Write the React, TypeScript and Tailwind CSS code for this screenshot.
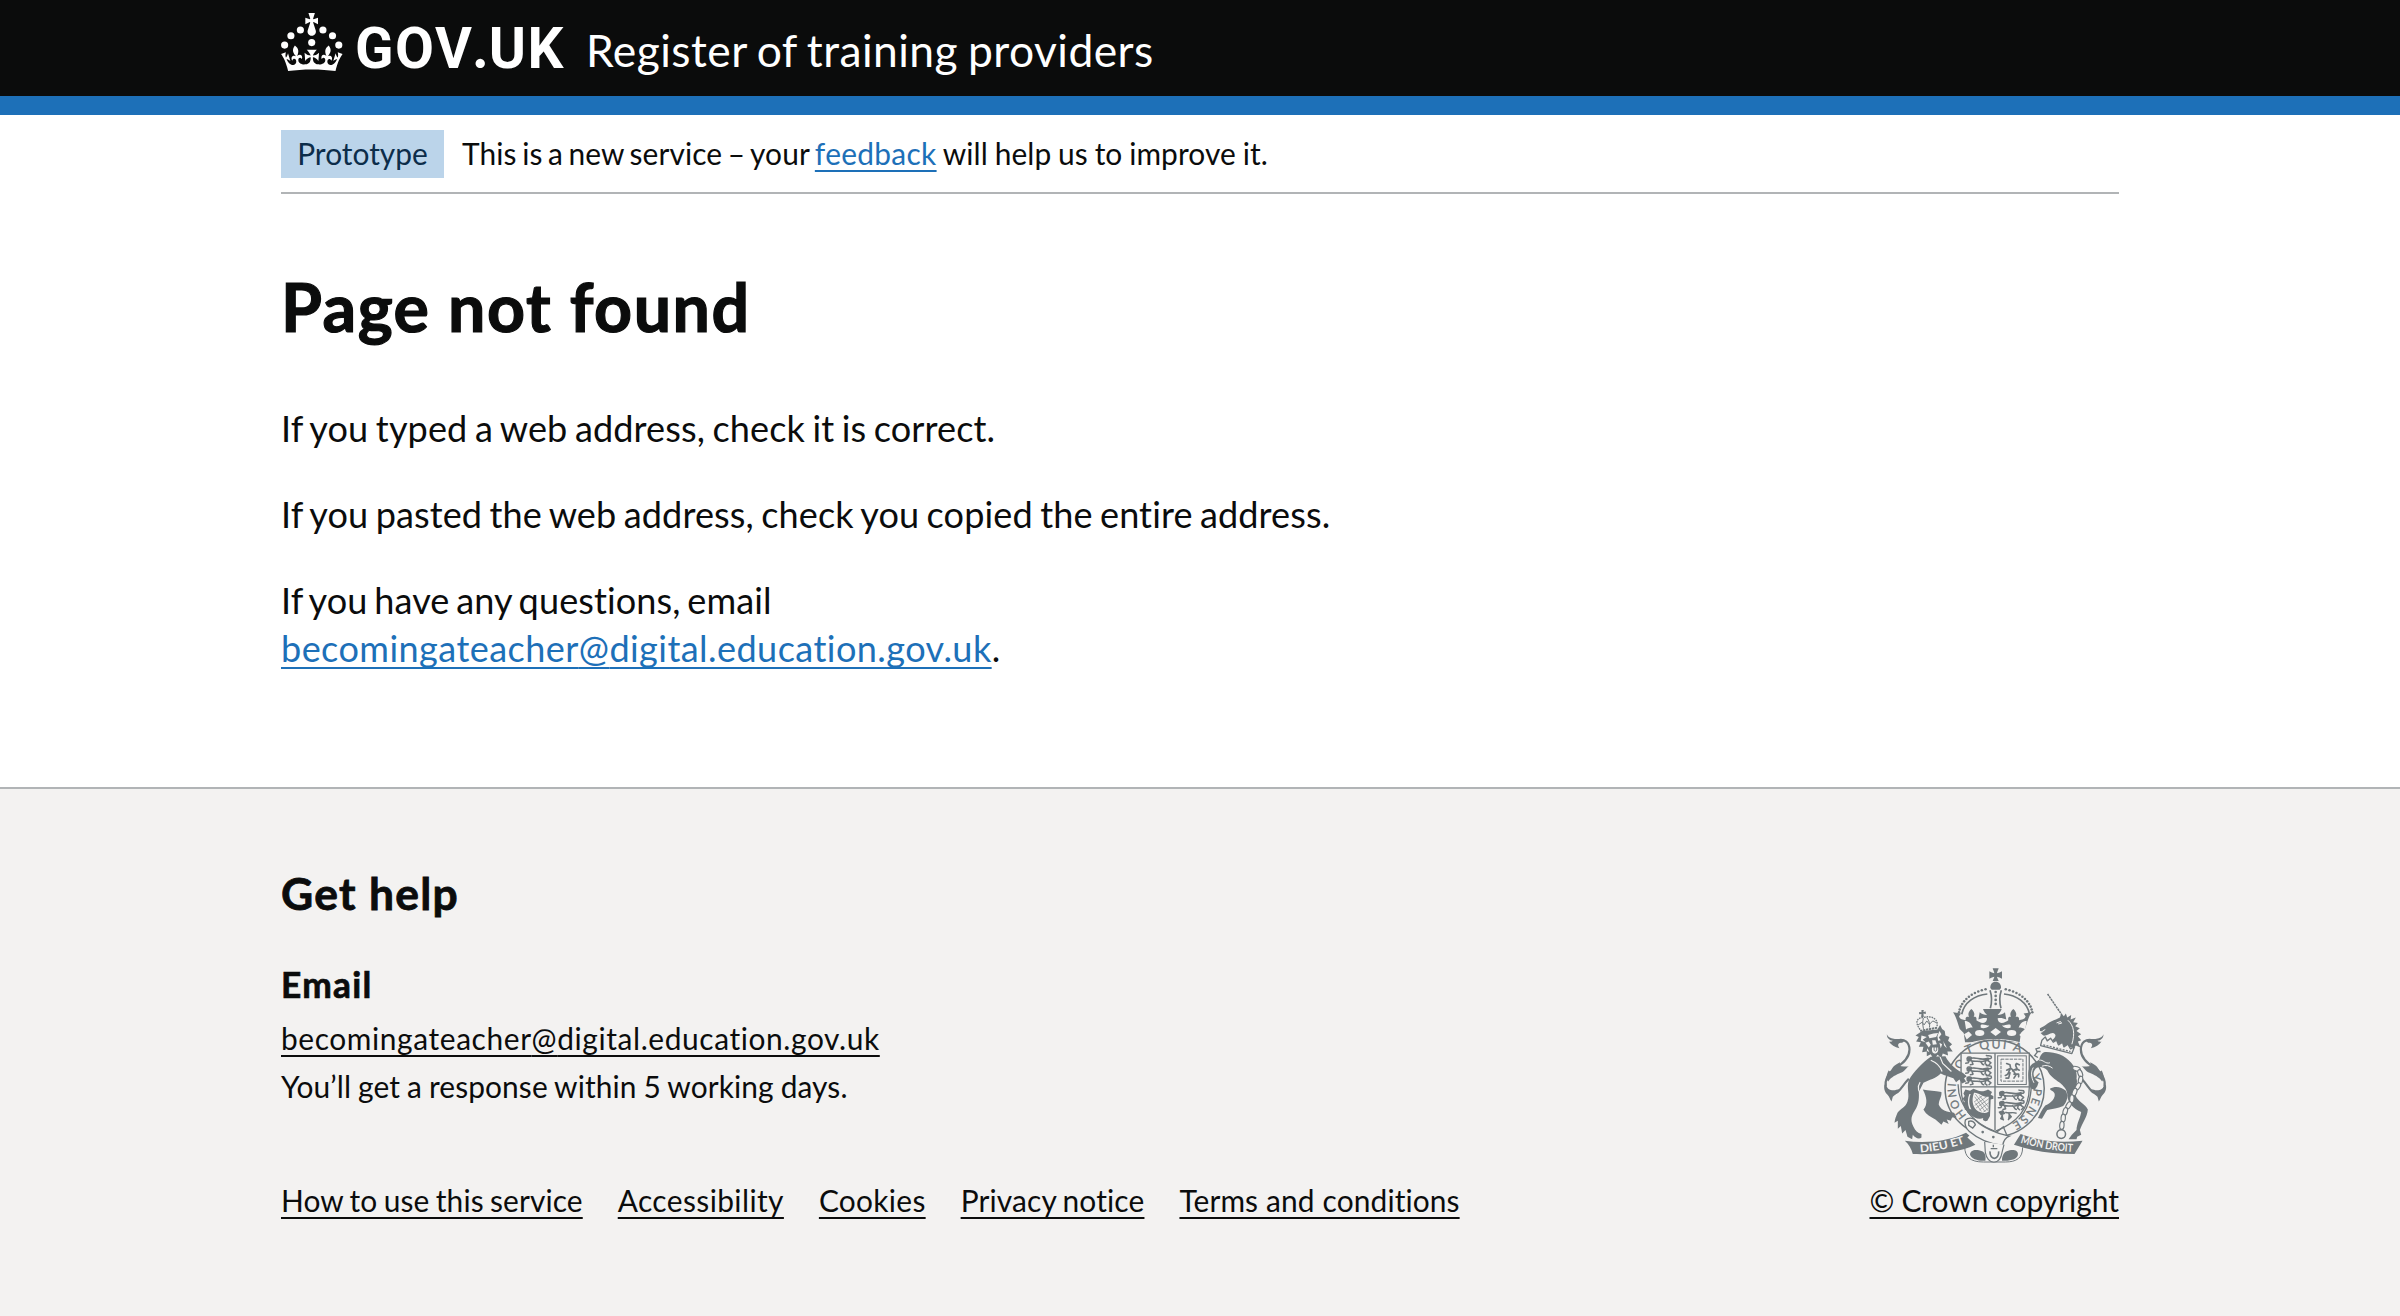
import React from 'react';

function Crown() {
  return (
    <svg viewBox="0 0 64 61" className="h-[59px] w-[62px] fill-white" aria-hidden="true">
      <circle cx="20" cy="17.6" r="3.7" />
      <circle cx="10.2" cy="23.5" r="3.7" />
      <circle cx="3.7" cy="33.2" r="3.7" />
      <circle cx="31.7" cy="30.6" r="3.7" />
      <circle cx="43.3" cy="17.6" r="3.7" />
      <circle cx="53.2" cy="23.5" r="3.7" />
      <circle cx="59.7" cy="33.2" r="3.7" />
      <path d="M33.1,9.8c.2-.1.3-.3.5-.5l4.6,2.4v-6.8l-4.6,1.5c-.1-.2-.3-.3-.5-.5l1.9-5.9h-6.7l1.9,5.9c-.2.1-.3.3-.5.5l-4.6-1.5v6.8l4.6-2.4c.1.2.3.3.5.5l-2.6,8c-.9,2.8,1.2,5.7,4.1,5.7h0c3,0,5.1-2.9,4.1-5.7l-2.6-8ZM37,37.9s-3.4,3.8-4.1,6.1c2.2,0,4.2-.5,6.4-2.8l-.7,8.5c-2-2.8-4.4-4.1-5.7-3.8.1,3.1.5,6.7,5.8,7.2,3.7.3,6.7-1.5,7-3.8.4-2.6-2-4.3-3.7-1.6-1.4-4.5,2.4-6.1,4.9-3.2-1.9-4.5-1.8-7.7,2.4-10.9,3,4,2.6,7.3-1.2,11.1,2.4-1.3,6.2,0,4,4.6-1.2-2.8-3.7-2.2-4.2.2-.3,1.7.7,3.7,3,4.2,1.9.3,4.7-.9,7-5.9-1.3,0-2.4.7-3.9,1.7l2.4-8c.6,2.3,1.4,3.7,2.2,4.5.6-1.6.5-2.8,0-5.3l5,1.8c-2.6,3.6-5.2,8.7-7.3,17.5-7.4-1.1-15.7-1.7-24.5-1.7h0c-8.8,0-17.1.6-24.5,1.7-2.1-8.9-4.7-13.9-7.3-17.5l5-1.8c-.5,2.5-.6,3.7,0,5.3.8-.8,1.6-2.3,2.2-4.5l2.4,8c-1.5-1-2.6-1.7-3.9-1.7,2.3,5,5.2,6.2,7,5.9,2.3-.4,3.3-2.4,3-4.2-.5-2.4-3-3.1-4.2-.2-2.2-4.6,1.6-6,4-4.6-3.7-3.7-4.2-7.1-1.2-11.1,4.2,3.2,4.3,6.4,2.4,10.9,2.5-2.8,6.3-1.3,4.9,3.2-1.8-2.7-4.1-1-3.7,1.6.3,2.3,3.3,4.1,7,3.8,5.4-.5,5.7-4.2,5.8-7.2-1.3-.2-3.7,1-5.7,3.8l-.7-8.5c2.2,2.3,4.2,2.7,6.4,2.8-.7-2.3-4.1-6.1-4.1-6.1h10.6,0Z" />
    </svg>
  );
}

const INK = '#6f777b';
const PAPER = '#f3f2f1';

/* A walking lion, repeated in the English quarters of the shield. */
function Passant({ x, y }: { x: number; y: number }) {
  return (
    <g transform={`translate(${x} ${y})`}>
      <path d="M4 8C2 2 14 0 18 5L15 13L5 14ZM17 6C32 2 44 12 60 7C66 5 70 8 68 14" fill={INK} stroke={INK} strokeWidth="4" strokeLinejoin="round" />
      <path d="M12 12C22 18 34 14 42 16C52 18 62 10 68 14L76 20L70 26M42 15C50 18 46 24 54 26M18 14L22 24L14 26M10 14L8 20L0 21M60 14L58 22L64 27M66 6C74 10 80 6 76 0C72-2 66 0 62-2" fill="none" stroke={INK} strokeWidth="4.5" strokeLinecap="round" strokeLinejoin="round" />
    </g>
  );
}

function Tail() {
  return (
    <g>
      <path d="M112 268C134 262 148 276 148 296C148 322 128 338 106 352C84 366 73 388 77 408C82 430 98 434 112 424C124 414 130 400 146 384" fill="none" stroke={INK} strokeWidth="6.5" />
      <path fill={INK} d="M80 250C84 262 96 262 104 264C116 266 126 262 134 270L126 276C114 276 110 282 118 292C104 290 92 282 86 272C90 274 96 272 98 270C88 268 80 262 80 250Z" />
      <path fill={INK} d="M146 346C136 352 134 362 122 366C108 372 94 378 84 392C76 382 80 368 86 358C88 364 92 362 94 356C100 344 108 340 120 334C118 342 118 346 124 346C132 346 138 348 146 346Z" />
      <path fill={INK} d="M73 400C82 416 96 424 118 414C110 424 108 432 98 438L94 452C88 444 88 438 82 432C74 424 70 414 73 400Z" />
    </g>
  );
}

function Crest() {
  const arc = (dir: number) =>
    Array.from({ length: 12 }, (_, i) => {
      const a = ((7 + i * 6.1) * Math.PI) / 180;
      return <circle key={i} cx={407 + dir * Math.cos(a) * 111} cy={194 - Math.sin(a) * 82} r="3.8" fill={INK} />;
    });
  const links = [
    [650, 354, 20], [661, 368, 70], [662, 388, 100], [654, 407, 120], [644, 424, 110], [636, 444, 95],
    [626, 464, 120], [616, 482, 105], [610, 502, 95], [606, 524, 95],
  ];
  return (
    <svg viewBox="69 48 672 592" className="h-[197px] w-[224px]" aria-hidden="true">
      {/* Royal crown */}
      <path fill={INK} d="M398 52h18c-2 6-4 10-5 15c5-1 10-3 15-6v22c-5-3-10-5-15-6c1 5 3 7 5 13h-18c2-6 4-8 5-13c-5 1-10 3-15 6v-22c5 3 10 5 15 6c-1-5-3-9-5-15z" />
      <path fill={INK} d="M391 111c-1-11 6-19 16-19s17 8 16 19l-4 5h-24z" />
      {arc(-1)}
      {arc(1)}
      <path d="M305 190C312 154 344 133 382 129M509 190C502 154 470 133 432 129" fill="none" stroke={INK} strokeWidth="5" />
      <path d="M390 118C396 136 396 154 391 172M424 118C418 136 418 154 423 172" stroke={INK} strokeWidth="5" fill="none" />
      {[123, 135, 147, 159].map((y) => <circle key={y} cx="407" cy={y} r="4" fill={INK} />)}
      <path fill={INK} d="M389 174h36c-2 8-8 14-12 18c8 0 16-2 22-8l4 22c-8-4-18-6-26-4c0 8 4 14 12 14c8 0 14-4 20-8c-2-8 2-12 8-10c-4-8-2-16 7-24c9 8 11 16 7 24c8-2 12 2 10 10c8-2 18-2 20-12l-6-8l24-4c-10 14-14 34-20 50l-12 12l-4 28h-164l-4-28l-12-12c-6-16-10-36-20-50l24 4l-6 8c2 10 12 10 20 12c-2-8 2-12 10-10c-4-8-2-16 7-24c9 8 11 16 7 24c6-2 10 2 8 10c6 4 12 8 20 8c8 0 12-6 12-14c-8-2-18 0-26 4l4-22c6 6 14 8 22 8c-4-4-10-10-12-18z" />
      <path fill={PAPER} d="M314 210c12 0 20 8 24 20c-8 0-14 2-20 6zM500 210c-12 0-20 8-24 20c8 0 14 2 20 6zM362 222c8-4 16 2 26 2c-6 8-20 10-26 6zM452 222c-8-4-16 2-26 2c6 8 20 10 26 6z" />
      <ellipse cx="359" cy="246" rx="14" ry="9" fill={PAPER} />
      <ellipse cx="455" cy="246" rx="14" ry="9" fill={PAPER} />
      <path fill={PAPER} d="M407 231l16 12-16 12-16-12zM312 250l14-8 10 10-16 14zM502 250l-14-8-10 10 16 14z" />
      <path d="M326 278C375 262 440 262 488 278" fill="none" stroke={PAPER} strokeWidth="3" />

      {/* Garter and motto */}
      <ellipse cx="404" cy="413" rx="149" ry="145" fill={PAPER} stroke={INK} strokeWidth="4.5" />
      <path d="M294 400C294 440 310 470 334 496M514 400C514 450 500 480 476 506" fill="none" stroke={INK} strokeWidth="4" />
      <path id="motto-left" d="M320 494A117 117 0 0 1 317 335" fill="none" />
      <path id="motto-top" d="M318 304Q400 268 490 300" fill="none" />
      <path id="motto-right" d="M514 373A117 117 0 0 1 453 519" fill="none" />
      <g fill={INK} stroke={INK} strokeWidth="0.8" className="font-['Lato'] text-[34px]">
        <text><textPath href="#motto-left" textLength="174">HONI SO</textPath></text>
        <text dy="8" className="text-[37px]"><textPath href="#motto-top" textLength="170">T QUI A</textPath></text>
        <text><textPath href="#motto-right" textLength="170">Y PENSE</textPath></text>
      </g>

      {/* Shield */}
      <path d="M303 307H508V410C508 474 468 518 405 542C342 518 303 474 303 410Z" fill={PAPER} stroke={INK} strokeWidth="4" />
      <path d="M405 307V538M303 408H508" stroke={INK} strokeWidth="4" />
      <Passant x={317} y={316} />
      <Passant x={317} y={346} />
      <Passant x={317} y={376} />
      <Passant x={415} y={420} />
      <Passant x={415} y={450} />
      <path d="M418 484l10-4 6 8-10 4zM436 484c10 6 24-2 34 4M428 492l-6 12 10 4M446 488l8 10-10 10" fill={INK} stroke={INK} strokeWidth="4" strokeLinejoin="round" />
      <rect x="413" y="315" width="86" height="86" fill="none" stroke={INK} strokeWidth="3" />
      <rect x="423" y="325" width="66" height="66" fill="none" stroke={INK} strokeWidth="3" strokeDasharray="10 3" />
      <path d="M440 338l10 4 2 10-12 6M452 352c10 4 10 14 16 20l-6 10M458 360l12-6 8 4M462 370l14 0 0 8M450 356c-6 8-2 16-14 18M450 366l-4 16-8 0M468 358c10-6-8-12 2-20l8 4" fill="none" stroke={INK} strokeWidth="5" strokeLinecap="round" strokeLinejoin="round" />
      <path fill={INK} d="M316 416l14 4 10-6 10 4c12 6 24 4 34-2l12 8-4 8 8 4v8l-8 2-2 50-8 14c-8 4-16-2-12-8c-14 6-30-2-38-10l-10-6 2-8-10-2 2-10-8-4 6-10-6-8 6-8-4-8z" />
      <path fill={PAPER} d="M342 426c14-2 24 14 44 12v44c-14 10-34 2-42-10c-8-14-8-30-2-46zM332 430c-6 14-6 32 2 46l-6-2c-6-14-6-30 0-44z" />
      <path d="M344 438l32 46M346 430l38 50M358 434l28 36M346 456l18 26M342 454l26-20M344 464l38-28M348 472l38-28M358 478l28-22M370 484l16-12" stroke={INK} strokeWidth="1.8" />

      {/* Lion supporter */}
      <Tail />
      <path fill={INK} d="M212 318C184 338 160 364 146 388C138 410 150 430 142 452C136 470 122 472 112 486C108 496 104 504 103 516L113 510L113 534L122 526L126 548L136 538L142 558L156 566L158 552C164 560 176 568 184 560L184 550C172 546 166 540 160 528C152 512 152 500 160 486C174 468 178 448 176 424L190 396C208 386 226 384 242 368C254 374 268 378 280 382L288 394L298 386L306 398L318 392L312 382L320 376L308 366C290 358 268 340 256 316Z" />
      <path fill={INK} d="M188 416C206 420 224 420 244 424C246 438 236 448 236 462C244 480 262 484 282 486L290 500L276 500L272 510L260 506L266 520L250 512L244 522L226 506C212 498 198 492 190 476C204 460 200 438 188 416Z" />
      <path d="M180 394C168 412 178 428 190 440C192 456 188 466 184 480M212 328C232 336 242 350 246 362M240 318l8 20 26 24" fill="none" stroke={PAPER} strokeWidth="3.5" />
      <path fill={INK} d="M186 240L166 254L176 258L168 272L182 274L176 288L190 288L186 304L200 302L200 316L212 310L222 328L232 312L244 320L248 308L264 314L262 302L278 302L268 288L276 280L264 270L268 258L256 254L254 240L246 234L240 222L232 236Z" />
      <path fill={PAPER} d="M184 254l16 4-12 8 8 8-14-4zM204 252l16-4 14-2-6 12-20 4zM238 240l6 10-8 10 6 8-8 2-2-14zM196 276l10-4 6 10-6 8zM216 268l10 0 4 12-12 2zM238 276l8 4-4 12zM250 270c2 8 8 14 10 22l-8-8zM202 292l6 12-8-4z" />
      <path fill={PAPER} d="M216 290h18c2 14-4 18-10 18s-10-6-8-18z" />
      <path d="M222 288v10c2 4 6 4 8 0v-10" fill="none" stroke={INK} strokeWidth="3" />
      <path fill={INK} d="M184 177h7l-1 6 7-1v7l-7-1 1 10h-8l1-9-7 1v-7l7 1z" />
      <path d="M180 236C162 212 172 200 190 200C212 192 238 204 230 228" fill="none" stroke={INK} strokeWidth="4" strokeDasharray="5 2.5" />
      <path d="M190 202c-4 10-2 20 0 32M200 200c8 10 10 20 8 30M174 222l12-8 6 8 8-12 8 10 10-10 12 6" fill="none" stroke={INK} strokeWidth="3" />
      <path d="M180 240L233 230" stroke={INK} strokeWidth="6" strokeDasharray="7 2" />

      {/* Unicorn supporter */}
      <g transform="translate(811 0) scale(-1 1)"><Tail /></g>
      <path d="M563 129L606 192" stroke={INK} strokeWidth="4.5" strokeDasharray="7 2" />
      <path fill={INK} d="M600 200L604 188L612 196L618 188L622 200L634 192L632 206L648 200L640 214L654 216L646 226L660 232L650 240L664 250L654 256L664 268L654 272L662 290L648 284C642 290 638 292 634 290C616 286 596 280 576 268C590 258 590 248 578 246C568 246 560 256 550 254L542 246L552 242L540 240L540 232C556 226 570 210 588 206Z" />
      <path d="M590 216l12-4 3 5-10 2M556 236l-8 4M624 208c18 16 22 40 12 72" fill="none" stroke={PAPER} strokeWidth="3" />
      <path d="M546 268L556 258L562 270L572 262L580 274L590 268L596 282L608 274L612 288L624 280L632 294L644 288L636 308L542 284Z" fill={PAPER} stroke={INK} strokeWidth="4" strokeLinejoin="round" />
      <path d="M550 282L632 302" stroke={INK} strokeWidth="4" strokeDasharray="6 4" />
      <path d="M540 290l-12 4 4 10-8 10 10 6M530 302h12" fill="none" stroke={INK} strokeWidth="4" />
      <path fill={INK} d="M552 304C582 302 614 312 634 336C648 352 652 366 650 384C656 400 640 424 648 436C654 452 676 460 684 476C682 500 666 518 660 538L664 552L652 558L650 566L626 566L636 552L650 538C650 520 662 500 664 484C642 474 624 458 622 434C624 420 612 406 600 396C584 384 570 376 562 358C548 346 532 344 524 358C516 370 524 388 536 394L532 406L524 418L512 412C504 392 502 362 510 348C516 336 530 334 538 326C540 316 544 308 552 304Z" />
      <path fill={INK} d="M570 414C586 404 604 408 618 420C626 436 622 452 610 466C594 474 576 474 562 478C556 486 552 496 546 504L534 502C540 490 546 476 556 464C574 458 588 440 584 428C580 420 572 420 570 414Z" />
      <path d="M538 328c12-2 18 12 32 8M546 346c12-4 22-2 32 6M520 350c-8 14-6 30 2 46" fill="none" stroke={PAPER} strokeWidth="3" />
      <g fill={PAPER} stroke={INK} strokeWidth="3.5">
        {links.map(([x, y, r], i) => (
          <ellipse key={i} cx={x} cy={y} rx="12" ry="6.5" transform={`rotate(${r} ${x} ${y})`} />
        ))}
        <circle cx="604" cy="550" r="13" strokeWidth="4.5" />
      </g>

      {/* Garter buckle */}
      <path d="M316 508C324 500 340 500 348 510C366 528 410 550 448 556C438 560 430 572 428 584C388 580 352 562 328 542C318 534 312 520 316 508Z" fill={PAPER} stroke={INK} strokeWidth="4" />
      <path d="M326 512c10-4 18 2 20 10l-8 10-12-8z" fill="none" stroke={INK} strokeWidth="4" />
      <circle cx="368" cy="544" r="4" fill={INK} />
      <path d="M408 546L430 528L440 552" fill="none" stroke={INK} strokeWidth="4" />

      {/* Scroll */}
      <path d="M314 588C314 618 330 634 370 634H436C470 634 488 622 488 590" fill="none" stroke={INK} strokeWidth="3" />
      <path fill={INK} d="M330 612c0-14 18-18 36-10c10 4 12 16 10 28c-22 2-42-6-46-18zM474 610c0-12-16-16-34-8c-10 4-14 16-14 28c24 2 48-4 48-20z" />
      <path d="M374 574L376 606C384 644 420 644 426 606L432 582" fill={PAPER} stroke={INK} strokeWidth="3.5" />
      <circle cx="400" cy="559" r="4" fill={INK} />
      <path d="M390 602C388 630 418 630 416 602" fill="none" stroke={INK} strokeWidth="5" />
      <path d="M400 582v8M392 594h20" stroke={INK} strokeWidth="4" />
      <path fill={INK} d="M134 570C200 580 270 570 318 546L328 554L322 560L346 582C296 606 230 612 158 610C154 594 146 580 134 570Z" />
      <path fill={INK} d="M482 550C540 572 600 578 668 570L644 610C580 610 520 602 462 582Z" />
      <path id="scroll-left" d="M180 605Q252 600 318 576" fill="none" />
      <path id="scroll-right" d="M481 576Q560 600 642 604" fill="none" />
      <g fill={PAPER} className="font-['Lato'] text-[33px] font-bold">
        <text><textPath href="#scroll-left" textLength="138" lengthAdjust="spacingAndGlyphs">DIEU ET</textPath></text>
        <text><textPath href="#scroll-right" textLength="160" lengthAdjust="spacingAndGlyphs">MON DROIT</textPath></text>
      </g>
    </svg>
  );
}

const small = 'text-[29.9px] leading-[48px]';
const underline = 'underline decoration-2 underline-offset-[5px] [text-decoration-skip-ink:none]';

/* The descending @ keeps a gap in the underline; other letters sit over it. */
function EmailAddress() {
  return (
    <>
      becomingateacher<span className="[text-decoration-skip-ink:auto]">@</span>digital.education.gov.uk
    </>
  );
}

const footerLinks = [
  { label: 'How to use this service', spacing: 'tracking-[0.1px] [word-spacing:-1.4px]' },
  { label: 'Accessibility', spacing: 'tracking-[0.4px]' },
  { label: 'Cookies', spacing: 'tracking-[0.3px]' },
  { label: 'Privacy notice', spacing: 'tracking-[0.15px] [word-spacing:-1.6px]' },
  { label: 'Terms and conditions', spacing: 'tracking-[0.1px] [word-spacing:0.2px]' },
];

export default function App() {
  return (
    <div className="flex h-[1316px] flex-col overflow-hidden bg-white font-['Lato',sans-serif] text-[#0b0c0c]">
      <header className="h-[115px] border-b-[19px] border-[#1d70b8] bg-[#0b0c0c] text-white">
        <div className="mx-auto flex w-[1838px] items-start">
          <div className="pt-[13px]"><Crown /></div>
          <span className="ml-[12px] mt-[7px] w-[211px] whitespace-nowrap font-['Roboto'] text-[56.5px] leading-[78px] font-bold tracking-[1.6px]">
            GOV<span className="font-['Lato'] font-black">.</span>UK
          </span>
          <span className="ml-[20px] mt-[20px] whitespace-nowrap text-[44.4px] leading-[60px] tracking-[0.45px] [word-spacing:-2px]">Register of training providers</span>
        </div>
      </header>

      <main className="mx-auto w-[1838px] grow">
        <div className="flex h-[79px] items-start border-b-2 border-[#b1b4b6] pt-[15px]">
          <strong className="flex h-[48px] w-[163px] justify-center bg-[#bbd4ea] text-[29.9px] leading-[46px] font-normal text-[#0c2d4a]">Prototype</strong>
          <p className="ml-[18px] text-[29.9px] leading-[46px] tracking-[0.1px] [word-spacing:-1px]">
            <span className="[word-spacing:-2.2px]">This is a new service – your </span>
            <a className={`tracking-[0.3px] text-[#1d70b8] ${underline}`}>feedback</a> will help us to improve it.
          </p>
        </div>
        <h1 className="mt-[77px] text-[66.3px] leading-[72px] font-bold tracking-[1.5px] [-webkit-text-stroke:1.2px_#0b0c0c]">Page not found</h1>
        <div className="mt-[61px] flex flex-col gap-[38px] text-[36.1px] leading-[48px] tracking-[0.1px]">
          <p className="[word-spacing:-1.8px]">If you typed a web address, check it is correct.</p>
          <p className="[word-spacing:-1.9px]">If you pasted the web address, check you copied the entire address.</p>
          <p className="[word-spacing:-2.6px]">
            If you have any questions, email
            <br />
            <a className={`tracking-[0.43px] text-[#1d70b8] ${underline}`}><EmailAddress /></a>.
          </p>
        </div>
      </main>

      <footer className="h-[529px] border-t-2 border-[#b1b4b6] bg-[#f3f2f1]">
        <div className="mx-auto flex w-[1838px] justify-between">
          <div className="pt-[80px]">
            <h2 className="text-[44.4px] leading-[48px] font-bold tracking-[1.3px] [-webkit-text-stroke:0.8px_#0b0c0c]">Get help</h2>
            <h3 className="mt-[44px] text-[35.3px] leading-[48px] font-bold tracking-[1.3px] [-webkit-text-stroke:0.7px_#0b0c0c]">Email</h3>
            <p className={`mt-[5px] tracking-[0.6px] ${small}`}><a className={underline}><EmailAddress /></a></p>
            <p className={`tracking-[0.1px] [word-spacing:-0.8px] ${small}`}>You’ll get a response within 5 working days.</p>
            <ul className="mt-[66px] flex gap-[35px]">
              {footerLinks.map(({ label, spacing }) => (
                <li key={label} className={`whitespace-nowrap ${spacing} ${small}`}><a className={underline}>{label}</a></li>
              ))}
            </ul>
          </div>
          <div className="flex flex-col items-end pt-[178px]">
            <div className="mr-[12px]"><Crest /></div>
            <a className={`mt-[12px] whitespace-nowrap [word-spacing:-0.6px] ${small} ${underline}`}>© Crown copyright</a>
          </div>
        </div>
      </footer>
    </div>
  );
}
